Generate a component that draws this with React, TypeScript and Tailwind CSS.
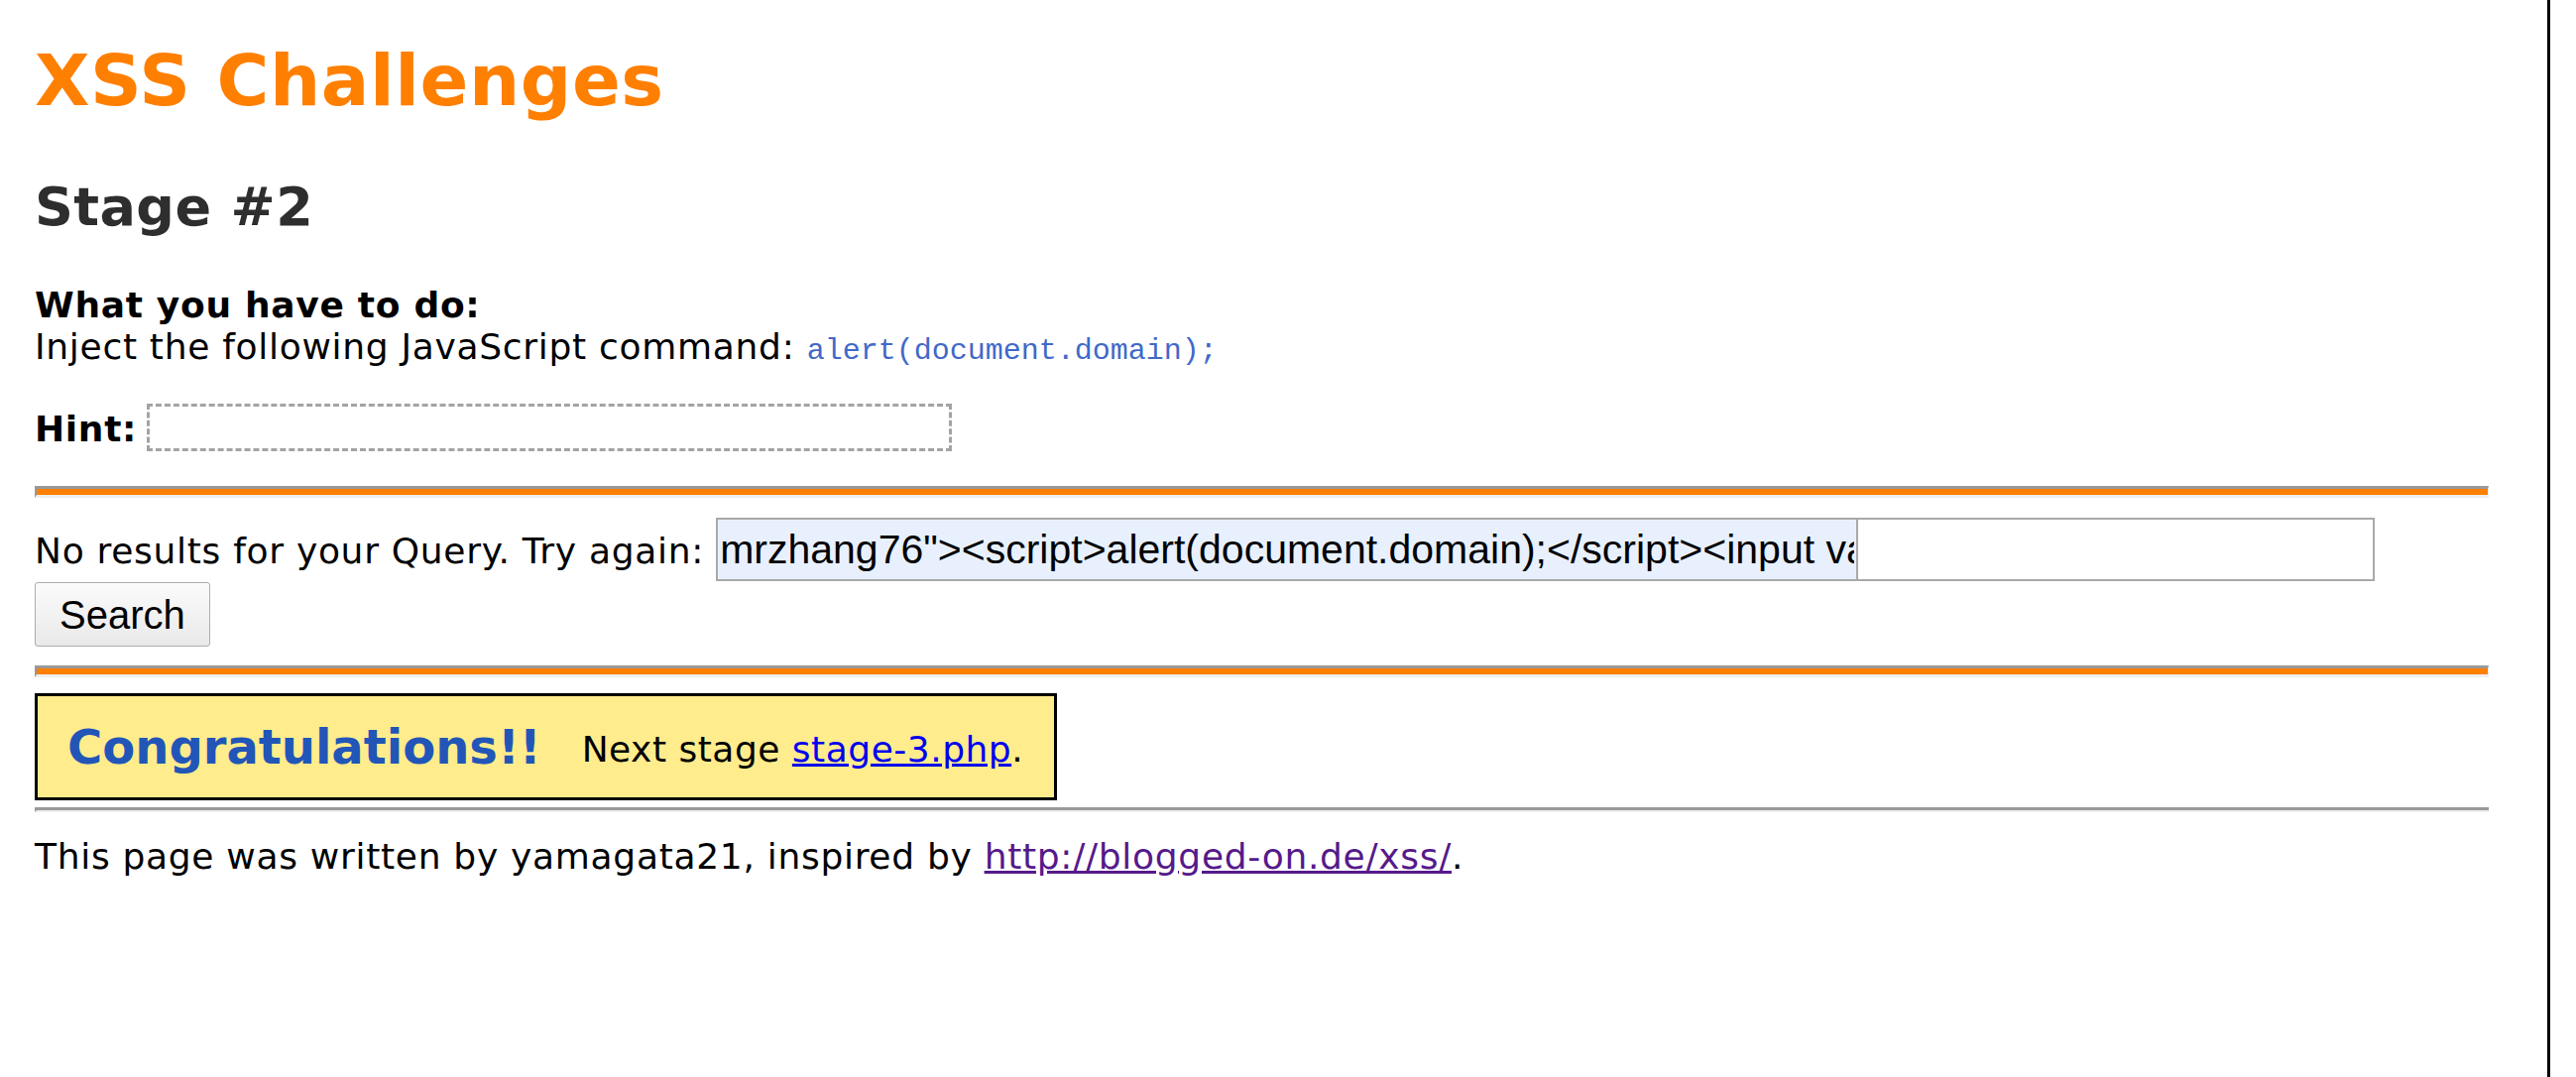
import React from 'react';

const queryValue = 'mrzhang76"><script>alert(document.domain);</script><input value="';

function Rule({ orange = true }: { orange?: boolean }) {
    if (!orange) {
        return <div className="h-[5px] border-t-[3px] border-l-[2px] border-b-[2px] border-t-[#999] border-l-[#999] border-b-[#eee]" />;
    }
    return (
        <div className="h-[12px] bg-[#ff7f00] border-t-[3px] border-l-[2px] border-b-[3px] border-r-[1px] border-t-[#999] border-l-[#999] border-b-[#eee] border-r-[#eee]" />
    );
}

export default function App() {
    return (
        <div className="flex min-h-screen bg-white font-['DejaVu_Sans',Verdana,sans-serif] text-[36px] leading-[42px] tracking-[0.7px] text-black">
            <main className="w-[2569px] shrink-0 pl-[35px] pr-[59px]">
                <h1 className="mt-[39px] text-[72px] leading-[84px] font-bold tracking-[0.6px] text-[#ff7f00]">XSS Challenges</h1>
                <h2 className="mt-[54px] text-[54px] leading-[63px] font-bold tracking-[0.4px] text-[#2e2e2e]">Stage #2</h2>

                <div className="mt-[47px]">
                    <div className="font-bold">What you have to do:</div>
                    <div>
                        Inject the following JavaScript command:{' '}
                        <code className="font-['Liberation_Mono',monospace] text-[30px] tracking-normal text-[#4169c9]">alert(document.domain);</code>
                    </div>
                </div>

                {/* hint text is hidden in the original page */}
                <div className="mt-[32px] flex items-center gap-[10px]">
                    <b className="mt-[4px]">Hint:</b>
                    <span className="inline-block h-[48px] w-[812px] border-[3px] border-dashed border-[#a3a3a3]" />
                </div>

                <div className="mt-[35px]">
                    <Rule />
                </div>

                <form className="mt-[20px]" onSubmit={(e) => e.preventDefault()}>
                    <div className="flex items-baseline">
                        <span className="whitespace-pre">No results for your Query. Try again: </span>
                        <input
                            readOnly
                            value={queryValue}
                            className="h-[64px] w-[1152px] border-2 border-[#a9a9a9] bg-[#e8f0fe] px-[2px] font-['Liberation_Sans',Arial,sans-serif] text-[41px] tracking-normal text-black outline-none"
                        />
                        <input
                            readOnly
                            value=""
                            className="h-[64px] w-[521px] border-2 border-l-0 border-[#a9a9a9] bg-white px-[2px] font-['Liberation_Sans',Arial,sans-serif] text-[41px] tracking-normal outline-none"
                        />
                    </div>
                    <button
                        type="submit"
                        className="mt-[1px] h-[65px] rounded-[3px] border border-[#adadad] bg-gradient-to-b from-[#fbfbfb] to-[#e9e9e9] px-[24px] font-['Liberation_Sans',Arial,sans-serif] text-[40px] leading-none tracking-normal text-black"
                    >
                        Search
                    </button>
                </form>

                <div className="mt-[19px]">
                    <Rule />
                </div>

                <div className="mt-[16px] inline-flex h-[108px] items-center gap-[41px] border-[3px] border-black bg-[#ffec8c] pl-[30px] pr-[31px]">
                    <span className="text-[48px] leading-[56px] font-bold tracking-normal text-[#2156b8]">Congratulations!!</span>
                    <span className="mt-[6px] tracking-[0.5px]">
                        Next stage{' '}
                        <a href="#" className="text-[#0000ee] underline">stage-3.php</a>.
                    </span>
                </div>

                <div className="mt-[7px]">
                    <Rule orange={false} />
                </div>

                <p className="mt-[24px]">
                    This page was written by yamagata21, inspired by{' '}
                    <a href="#" className="text-[#551a8b] underline">http://blogged-on.de/xss/</a>.
                </p>
            </main>
            <div className="w-[3px] shrink-0 bg-black" />
            <div className="flex-1 bg-white" />
        </div>
    );
}
